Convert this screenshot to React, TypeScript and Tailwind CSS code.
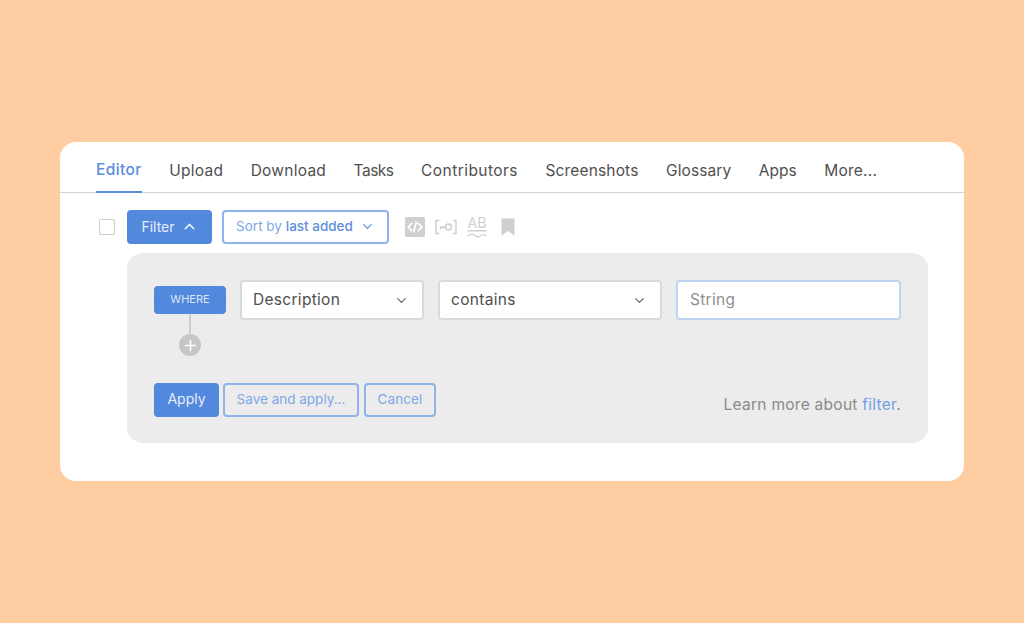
import { ChevronDown, ChevronUp, Plus } from 'lucide-react';

const tabs = [
  { label: 'Upload', className: '' },
  { label: 'Download', className: '' },
  { label: 'Tasks', className: 'tracking-[-0.500px]' },
  { label: 'Contributors', className: 'tracking-[0.450px]' },
  { label: 'Screenshots', className: 'tracking-[0.150px]' },
  { label: 'Glossary', className: 'tracking-[0.100px]' },
  { label: 'Apps', className: 'tracking-[0px]' },
  { label: 'More...', className: '' },
];

function CodeIcon() {
  return (
    <svg width="20" height="20" viewBox="0 0 20 20">
      <rect width="20" height="20" rx="1.5" fill="#cfcfcf" />
      <path d="M7.200 5.800 3.200 10l4 4.200M12.800 5.800l4 4.200-4 4.200M11.500 4.500 8.500 15.500" fill="none" stroke="#fff" strokeWidth="1.800" />
    </svg>
  );
}

function KeyIcon() {
  return (
    <svg width="22" height="16" viewBox="0 0 22 16" fill="none" stroke="#cfcfcf" strokeWidth="1.500">
      <path d="M4 1.500H1v13h3M18 1.500h3v13h-3" />
      <circle cx="13.500" cy="8" r="3" />
      <path d="M10.500 8H5.500v2.500M8 8v1.800" />
    </svg>
  );
}

function SpellIcon() {
  return (
    <div className="flex h-[24px] w-[20px] flex-col items-center">
      <span className="text-[14px] leading-[15px] text-[#cfcfcf] [font-family:Inter,sans-serif]">AB</span>
      <svg width="20" height="8" viewBox="0 0 20 8" fill="none" stroke="#cfcfcf" strokeWidth="1.400">
        <path d="M0.500 0.800h19M0.500 6c3-2.500 5-2.500 7-.8s4 2 5.500.8 4-2.200 6.500 0" />
      </svg>
    </div>
  );
}

function BookmarkIcon() {
  return (
    <svg width="14" height="18" viewBox="0 0 14 18">
      <path d="M0.500 0.500h13v17L7 13 0.500 17.500z" fill="#cfcfcf" />
    </svg>
  );
}

export default function App() {
  return (
    <div className="flex h-[623px] w-[1024px] justify-center overflow-hidden bg-[#fecda2] pt-[142px] [font-family:Inter,sans-serif]">
      <div className="h-[339px] w-[904px] rounded-[16px] bg-white">
        <nav className="flex h-[51px] items-stretch gap-[27.500px] border-b border-[#d4d4d4] pl-[36px] text-[15.500px] tracking-[0.250px] text-[#4f4f4f]">
          <span className="-mb-px flex items-center border-b-2 border-[#5a8ddd] pt-[7px] font-medium tracking-[0.400px] text-[#5a8ddd]">Editor</span>
          {tabs.map((t) => (
            <span key={t.label} className={`flex items-center pt-[7px] ${t.className}`}>{t.label}</span>
          ))}
        </nav>

        <div className="flex items-center pl-[39px] pt-[17px]">
          <span className="h-[16px] w-[16px] rounded-[2px] border border-[#cccccc]" />
          <button className="ml-[12px] flex h-[34px] w-[85px] items-center justify-center gap-[6px] rounded-[4px] bg-[#5389dc] pb-px text-[14px] text-[#e6eefa]">
            Filter
            <ChevronUp size={17} strokeWidth={2} />
          </button>
          <button className="ml-[10px] flex h-[34px] w-[167px] items-center justify-center gap-[7px] rounded-[4px] border-2 border-[#8fb3ea] pb-px text-[13.500px] text-[#7ea8e8]">
            <span>
              Sort by <span className="font-medium text-[#5f90dc]">last added</span>
            </span>
            <ChevronDown size={15} strokeWidth={2} className="text-[#5f90dc]" />
          </button>
          <div className="ml-[16px] flex items-center gap-[10px]">
            <CodeIcon />
            <KeyIcon />
            <SpellIcon />
            <span className="ml-[4px] flex">
              <BookmarkIcon />
            </span>
          </div>
        </div>

        <div className="ml-[67px] mt-[9px] h-[190px] w-[801px] rounded-[16px] bg-[#ececec] px-[27px] pt-[27px]">
          <div className="flex items-start">
            <div className="flex w-[72px] flex-col items-center pt-[6px]">
              <span className="flex h-[28px] w-[72px] items-center justify-center rounded-[4px] bg-[#5389dc] pb-[2px] text-[11px] text-[#dbe7f8]">WHERE</span>
              <span className="h-[20px] w-[2px] bg-[#cccccc]" />
              <span className="flex h-[22px] w-[22px] items-center justify-center rounded-full bg-[#c6c6c6] text-white">
                <Plus size={17} strokeWidth={2.200} />
              </span>
            </div>
            <div className="ml-[14px] flex h-[40px] w-[184px] items-center justify-between rounded-[4px] border-2 border-[#dadada] bg-white pl-[11px] pr-[13px] text-[15.500px] tracking-[0.300px] text-[#4f4f4f]">
              Description
              <ChevronDown size={15} strokeWidth={2} className="text-[#6b6b6b]" />
            </div>
            <div className="ml-[14px] flex h-[40px] w-[224px] items-center justify-between rounded-[4px] border-2 border-[#dadada] bg-white pl-[11px] pr-[13px] text-[15.500px] tracking-[0.300px] text-[#4f4f4f]">
              contains
              <ChevronDown size={15} strokeWidth={2} className="text-[#6b6b6b]" />
            </div>
            <div className="ml-[14px] flex h-[40px] w-[225px] items-center rounded-[4px] border-2 border-[#c0d5f4] bg-white pl-[12px] text-[15.500px] tracking-[0.300px] text-[#8f8f8f]">
              String
            </div>
          </div>

          <div className="mt-[27px] flex items-start">
            <button className="flex h-[34px] w-[65px] items-center justify-center rounded-[4px] bg-[#5389dc] pb-[3px] text-[14px] text-[#e6eefa]">Apply</button>
            <button className="ml-[4px] flex h-[34px] w-[136px] items-center justify-center rounded-[4px] border-2 border-[#8fb3ea] pb-[2px] text-[13.500px] text-[#7ea8e8]">Save and apply...</button>
            <button className="ml-[5px] flex h-[34px] w-[72px] items-center justify-center rounded-[4px] border-2 border-[#8fb3ea] pb-[2px] text-[13.500px] tracking-[0.100px] text-[#7ea8e8]">Cancel</button>
            <p className="ml-auto pt-[12px] text-[15.500px] leading-[20px] tracking-[0.270px] text-[#8a8a8a]">
              Learn more about <span className="text-[#6f9fe6]">filter</span>.
            </p>
          </div>
        </div>
      </div>
    </div>
  );
}
